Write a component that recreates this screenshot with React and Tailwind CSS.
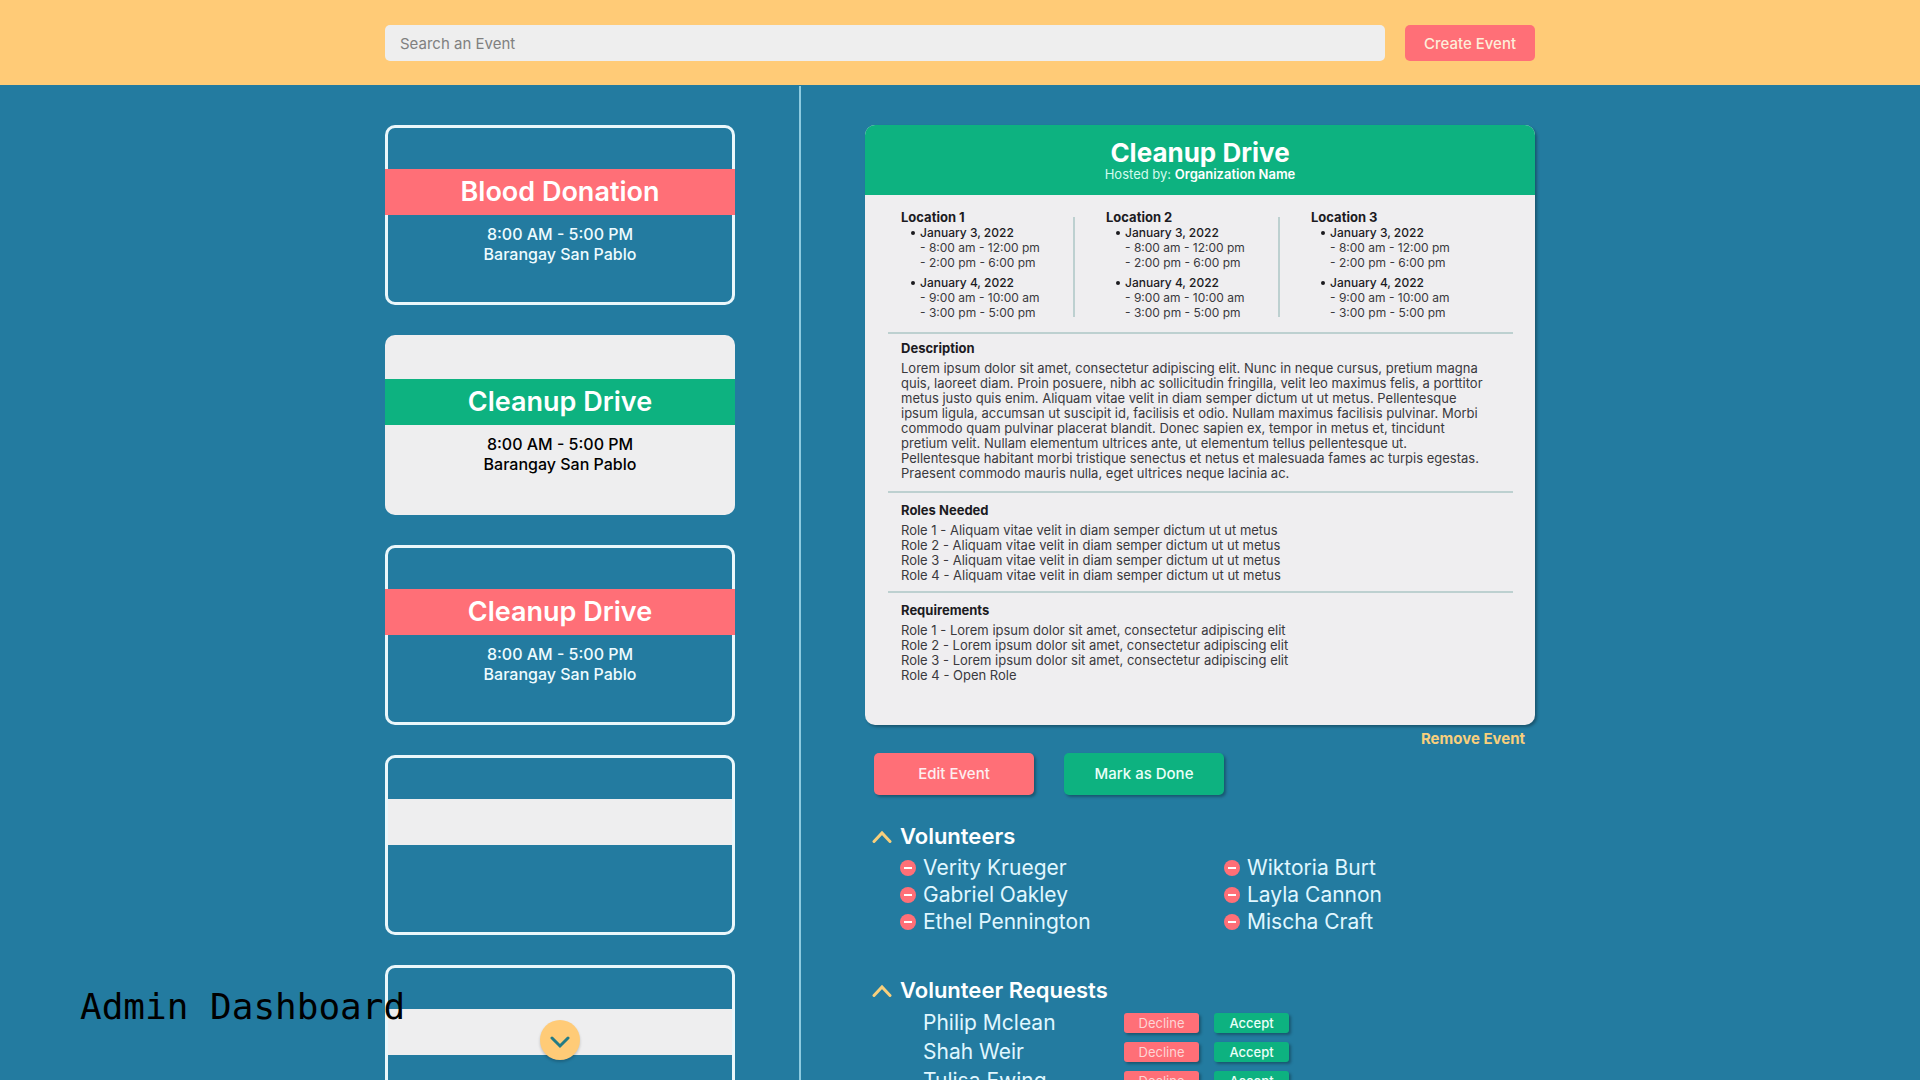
import React from "react";

const events = [
  { title: "Blood Donation", time: "8:00 AM - 5:00 PM", place: "Barangay San Pablo" },
  { title: "Cleanup Drive", time: "8:00 AM - 5:00 PM", place: "Barangay San Pablo", active: true },
  { title: "Cleanup Drive", time: "8:00 AM - 5:00 PM", place: "Barangay San Pablo" },
  {},
  {},
];

const locations = ["Location 1", "Location 2", "Location 3"];

const schedule = [
  { day: "January 3, 2022", slots: ["8:00 am - 12:00 pm", "2:00 pm - 6:00 pm"] },
  { day: "January 4, 2022", slots: ["9:00 am - 10:00 am", "3:00 pm - 5:00 pm"] },
];

const description = [
  "Lorem ipsum dolor sit amet, consectetur adipiscing elit. Nunc in neque cursus, pretium magna",
  "quis, laoreet diam. Proin posuere, nibh ac sollicitudin fringilla, velit leo maximus felis, a porttitor",
  "metus justo quis enim. Aliquam vitae velit in diam semper dictum ut ut metus. Pellentesque",
  "ipsum ligula, accumsan ut suscipit id, facilisis et odio. Nullam maximus facilisis pulvinar. Morbi",
  "commodo quam pulvinar placerat blandit. Donec sapien ex, tempor in metus et, tincidunt",
  "pretium velit. Nullam elementum ultrices ante, ut elementum tellus pellentesque ut.",
  "Pellentesque habitant morbi tristique senectus et netus et malesuada fames ac turpis egestas.",
  "Praesent commodo mauris nulla, eget ultrices neque lacinia ac.",
];

const roles = [
  "Role 1 - Aliquam vitae velit in diam semper dictum ut ut metus",
  "Role 2 - Aliquam vitae velit in diam semper dictum ut ut metus",
  "Role 3 - Aliquam vitae velit in diam semper dictum ut ut metus",
  "Role 4 - Aliquam vitae velit in diam semper dictum ut ut metus",
];

const requirements = [
  "Role 1 - Lorem ipsum dolor sit amet, consectetur adipiscing elit",
  "Role 2 - Lorem ipsum dolor sit amet, consectetur adipiscing elit",
  "Role 3 - Lorem ipsum dolor sit amet, consectetur adipiscing elit",
  "Role 4 - Open Role",
];

const volunteers = [
  "Verity Krueger",
  "Wiktoria Burt",
  "Gabriel Oakley",
  "Layla Cannon",
  "Ethel Pennington",
  "Mischa Craft",
];

const requests = ["Philip Mclean", "Shah Weir", "Tulisa Ewing"];

function EventCard({ title, time, place, active }) {
  const band = !title ? "mx-0 bg-[#eeeeef]" : active ? "-mx-[3px] bg-[#0db280]" : "-mx-[3px] bg-[#ff6f77]";
  return (
    <li
      className={`h-[180px] shrink-0 rounded-[10px] border-[3px] pt-[41px] text-center ${
        active ? "border-[#eeeeef] bg-[#eeeeef] text-black" : "border-[#eaf7fb] text-[#eefbff]"
      }`}
    >
      <h2 className={`h-[46px] text-[27px] leading-[46px] font-semibold text-white ${band}`}>{title}</h2>
      <p className="mt-[9px] text-base leading-5 font-medium">{time}</p>
      <p className="text-base leading-5 font-medium">{place}</p>
    </li>
  );
}

function Lines({ title, items, className }) {
  return (
    <section className={`mr-[22px] ml-[23px] border-t-2 border-[#bdd0d0] px-[13px] text-[13px] leading-[15px] ${className}`}>
      <h3 className="font-bold text-[#1c1b1f]">{title}</h3>
      <p className="mt-[5px] whitespace-nowrap">
        {items.map((line) => (
          <span key={line} className="block">{line}</span>
        ))}
      </p>
    </section>
  );
}

function Toggle({ label }) {
  return (
    <button type="button" className="flex items-center gap-2 text-[22px] leading-[30px] font-semibold text-white">
      <svg className="h-5 w-5" viewBox="0 0 20 20" fill="none" stroke="#f8cf7c" strokeWidth="3" strokeLinecap="round" aria-hidden="true">
        <path d="M2 15.5 L10 7 L18 15.5" />
      </svg>
      {label}
    </button>
  );
}

export default function App() {
  return (
    <div className="relative flex h-screen flex-col overflow-hidden bg-[#237ba0] font-['Inter',sans-serif]">
      <header className="shrink-0 bg-[#ffcb77]">
        <form className="mx-auto flex h-[85px] w-full max-w-[1150px] items-center gap-5" onSubmit={(e) => e.preventDefault()}>
          <input
            type="search"
            aria-label="Search an Event"
            placeholder="Search an Event"
            className="h-9 min-w-0 flex-1 rounded-[5px] bg-[#eeeeee] px-[15px] pt-[2px] text-[15px] placeholder:text-[#808080]"
          />
          <button type="button" className="h-9 w-[130px] rounded-[5px] bg-[#ff6f77] pt-[3px] text-[15px] font-medium text-[#fdeeda]">
            Create Event
          </button>
        </form>
      </header>

      <div className="mx-auto flex min-h-0 w-full max-w-[1150px] flex-1 gap-16">
        <ul className="flex w-[350px] shrink-0 flex-col gap-[30px] overflow-hidden pt-10">
          {events.map((event, i) => (
            <EventCard key={i} {...event} />
          ))}
        </ul>

        <div className="mt-px w-[2px] shrink-0 bg-[#8dcbe0]" />

        <main className="min-w-0 flex-1">
          <article className="mt-10 rounded-[10px] bg-[#efeef0] pb-[42px] text-xs leading-[15px] text-[#3a393d] shadow-[2px_2px_3px_rgba(0,0,0,0.3)]">
            <header className="h-[70px] rounded-t-[10px] bg-[#0db280] pt-[13px] text-center text-white">
              <h1 className="text-[26px] leading-[29px] font-bold">Cleanup Drive</h1>
              <p className="text-[13px] leading-[15px] text-[#d3fbee]">
                Hosted by: <strong className="font-semibold text-white">Organization Name</strong>
              </p>
            </header>

            <div className="flex pt-[15px] pb-[12px] pl-9">
              {locations.map((name, i) => (
                <section key={name} className="flex w-[205px]">
                  <div className="flex-1">
                    <h3 className="text-[13px] leading-[15px] font-bold text-[#1c1b1f]">{name}</h3>
                    <ul className="flex flex-col gap-[5px]">
                      {schedule.map(({ day, slots }) => (
                        <li key={day} className="pl-[19px]">
                          <p className="-ml-[9px] flex items-center gap-[5px] font-medium text-[#1c1b1f]">
                            <span className="h-1 w-1 rounded-full bg-[#1c1b1f]" />
                            {day}
                          </p>
                          {slots.map((slot) => (
                            <p key={slot}>- {slot}</p>
                          ))}
                        </li>
                      ))}
                    </ul>
                  </div>
                  {i < 2 && <div className="mt-[7px] mr-[31px] h-[100px] w-[2px] bg-[#bdd0d0]" />}
                </section>
              ))}
            </div>

            <Lines title="Description" items={description} className="pt-[7px] pb-[10px]" />
            <Lines title="Roles Needed" items={roles} className="pt-[10px] pb-[8px]" />
            <Lines title="Requirements" items={requirements} className="pt-[10px]" />
          </article>

          <div className="flex h-7 justify-end pr-[10px]">
            <button type="button" className="text-[15px] font-bold text-[#f8cf7c]">Remove Event</button>
          </div>

          <div className="flex gap-[30px] pl-[9px] text-[15px] font-medium">
            <button type="button" className="h-[42px] w-40 rounded-[5px] bg-[#ff6f77] text-[#fdeef0] shadow-[2px_2px_3px_rgba(0,0,0,0.3)]">
              Edit Event
            </button>
            <button type="button" className="h-[42px] w-40 rounded-[5px] bg-[#0db280] text-[#eafff8] shadow-[2px_2px_3px_rgba(0,0,0,0.3)]">
              Mark as Done
            </button>
          </div>

          <section className="mt-[26px] pl-[7px]">
            <Toggle label="Volunteers" />
            <ul className="mt-[3px] grid grid-cols-[324px_1fr] pl-7 text-[21px] leading-[27px] text-[#e0f7ff]">
              {volunteers.map((name) => (
                <li key={name} className="flex items-center gap-[7px]">
                  <button type="button" aria-label={`Remove ${name}`} className="flex h-4 w-4 items-center justify-center rounded-full bg-[#ff6f77]">
                    <span className="h-[2px] w-2 bg-white" />
                  </button>
                  {name}
                </li>
              ))}
            </ul>
          </section>

          <section className="mt-10 pl-[7px]">
            <Toggle label="Volunteer Requests" />
            <ul className="mt-[3px] pl-[51px] text-[21px] leading-[29px] text-[#e0f7ff]">
              {requests.map((name) => (
                <li key={name} className="flex items-center gap-[15px]">
                  <span className="w-[186px]">{name}</span>
                  <button type="button" className="h-5 w-[75px] rounded-[3px] bg-[#ff6f77] text-[13px] leading-5 text-[#fdd5d5] shadow-[2px_2px_3px_rgba(0,0,0,0.3)]">
                    Decline
                  </button>
                  <button type="button" className="h-5 w-[75px] rounded-[3px] bg-[#0db280] text-[13px] leading-5 font-medium text-[#eafff8] shadow-[2px_2px_3px_rgba(0,0,0,0.3)]">
                    Accept
                  </button>
                </li>
              ))}
            </ul>
          </section>
        </main>
      </div>

      <div className="pointer-events-none absolute inset-x-0 bottom-5 mx-auto flex w-full max-w-[1150px]">
        <div className="flex w-[350px] justify-center">
          <button type="button" aria-label="Show more events" className="pointer-events-auto flex h-10 w-10 items-center justify-center rounded-full bg-[#ffcb77] shadow-[0_2px_3px_rgba(0,0,0,0.2)]">
            <svg className="h-5 w-5" viewBox="0 0 20 20" fill="none" stroke="#237b85" strokeWidth="3" strokeLinecap="round" aria-hidden="true">
              <path d="M2 8 L10 16 L18 8" />
            </svg>
          </button>
        </div>
      </div>

      <p className="absolute bottom-[53px] left-20 font-['DejaVu_Sans_Mono',monospace] text-4xl text-black">Admin Dashboard</p>
    </div>
  );
}
